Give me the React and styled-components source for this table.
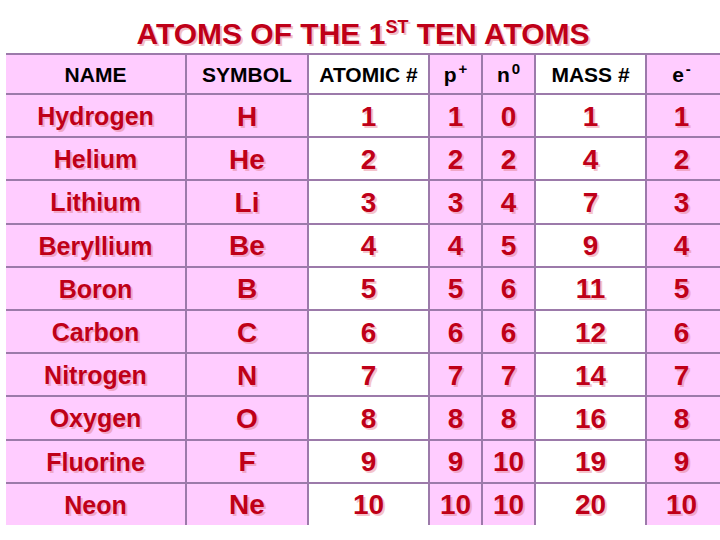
import React from "react";
import styled, { createGlobalStyle } from "styled-components";

const GlobalStyle = createGlobalStyle`
  html, body {
    margin: 0;
    padding: 0;
    background: #ffffff;
    overflow: hidden;
  }
  body {
    font-family: "Liberation Sans", Arial, sans-serif;
  }
`;

const Page = styled.div`
  width: 720px;
  height: 540px;
  overflow: hidden;
`;

const Title = styled.h1`
  margin: 0;
  padding: 17px 0 0 6px;
  font-size: 30px;
  line-height: 34px;
  font-weight: bold;
  text-align: center;
  color: #bf0018;
  text-shadow: 2px 2px 0 #f2c0c8;

  & sup {
    font-size: 18px;
    line-height: 0;
    vertical-align: 11px;
  }
`;

const Grid = styled.div`
  margin: 2px 0 0 6px;
  width: 714px;
  display: grid;
  grid-template-columns: 179px 120px 119px 51px 51px 109px 1fr;
  grid-template-rows: 38px repeat(10, 41.2px);
  gap: 2px;
  background: #9c7aaa;
  border-top: 2px solid #9c7aaa;
`;

const Cell = styled.div`
  display: flex;
  align-items: center;
  justify-content: center;
  background: ${(p) => (p.$pink ? "#ffccff" : "#ffffff")};
  font-weight: bold;
  white-space: nowrap;
  padding-right: ${(p) => (p.$last ? "4px" : "0")};
`;

const HeadCell = styled(Cell)`
  color: #000000;
  font-size: 21px;
  padding-top: 2px;
`;

const Sup = styled.sup`
  font-size: 15px;
  line-height: 0;
  vertical-align: 8px;
  margin-left: 2px;
`;

const DataCell = styled(Cell)`
  color: #bf0018;
  font-size: ${(p) => (p.$name ? "25px" : "28px")};
  text-shadow: 2px 2px 0 ${(p) => (p.$pink ? "#f0a8c8" : "#f4c4cc")};
  padding-top: 2px;
`;

const pinkCols = [true, true, false, true, true, false, true];

const atoms = [
  ["Hydrogen", "H", 1, 1, 0, 1, 1],
  ["Helium", "He", 2, 2, 2, 4, 2],
  ["Lithium", "Li", 3, 3, 4, 7, 3],
  ["Beryllium", "Be", 4, 4, 5, 9, 4],
  ["Boron", "B", 5, 5, 6, 11, 5],
  ["Carbon", "C", 6, 6, 6, 12, 6],
  ["Nitrogen", "N", 7, 7, 7, 14, 7],
  ["Oxygen", "O", 8, 8, 8, 16, 8],
  ["Fluorine", "F", 9, 9, 10, 19, 9],
  ["Neon", "Ne", 10, 10, 10, 20, 10],
];

export default function App() {
  return (
    <Page>
      <GlobalStyle />
      <Title>
        ATOMS OF THE 1<sup>ST</sup> TEN ATOMS
      </Title>
      <Grid>
        <HeadCell $pink>NAME</HeadCell>
        <HeadCell $pink>SYMBOL</HeadCell>
        <HeadCell>ATOMIC #</HeadCell>
        <HeadCell $pink>
          <span>
            p<Sup>+</Sup>
          </span>
        </HeadCell>
        <HeadCell $pink>
          <span>
            n<Sup>0</Sup>
          </span>
        </HeadCell>
        <HeadCell>MASS #</HeadCell>
        <HeadCell $pink $last>
          <span>
            e<Sup>-</Sup>
          </span>
        </HeadCell>
        {atoms.map((row) =>
          row.map((value, i) => (
            <DataCell
              key={row[0] + i}
              $pink={pinkCols[i]}
              $name={i === 0}
              $last={i === 6}
            >
              {value}
            </DataCell>
          ))
        )}
      </Grid>
    </Page>
  );
}
